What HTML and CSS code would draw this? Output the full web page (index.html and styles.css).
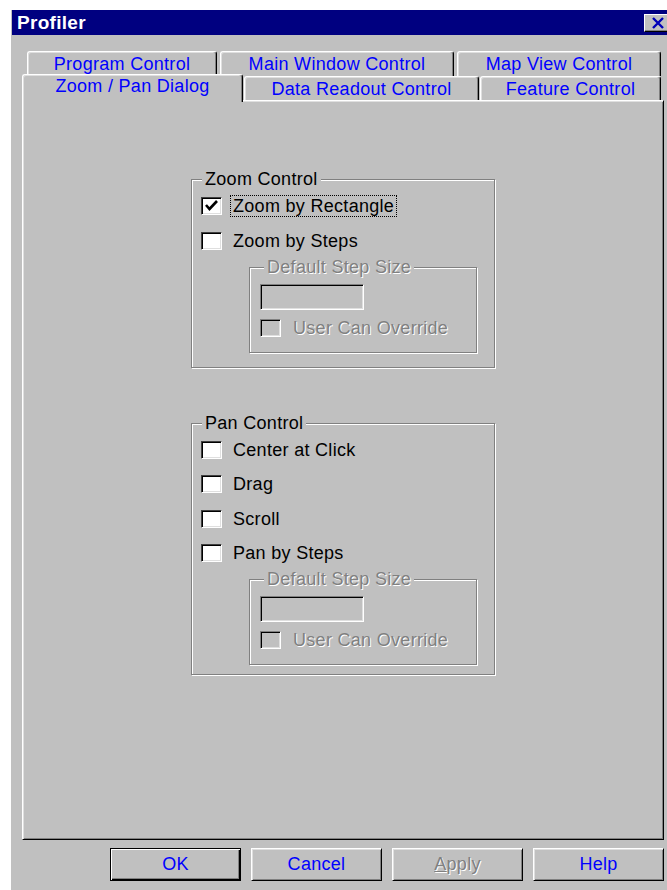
FILE: index.html
```html
<!DOCTYPE html>
<html lang="en">
<head>
<meta charset="utf-8">
<title>Profiler</title>
<link rel="stylesheet" href="styles.css">
</head>
<body>
<div class="window">
  <div class="titlebar">
    <span class="title">Profiler</span>
    <button class="close" type="button" aria-label="Close">
      <svg width="14" height="12" viewBox="0 0 14 12"><path d="M2 1 L12 11 M12 1 L2 11" stroke="#0000b8" stroke-width="2.4" fill="none"/></svg>
    </button>
  </div>

  <div class="tabs">
    <div class="tab-row back">
      <div class="tab w-program">Program Control</div>
      <div class="tab w-main">Main Window Control</div>
      <div class="tab w-map">Map View Control</div>
    </div>
    <div class="tab-row front">
      <div class="tab selected w-zoom">Zoom / Pan Dialog</div>
      <div class="tab w-data">Data Readout Control</div>
      <div class="tab w-feature">Feature Control</div>
    </div>
  </div>

  <div class="panel">
    <div class="group group-zoom">
      <div class="legend">Zoom Control</div>
      <div class="options">
        <div class="option">
          <span class="check">
            <svg width="17" height="14" viewBox="0 0 17 14"><path d="M3 6 L6.5 10 L14 2" stroke="#000" stroke-width="2.6" fill="none"/></svg>
          </span>
          <span class="label focus">Zoom by Rectangle</span>
        </div>
        <div class="option">
          <span class="check"></span>
          <span class="label">Zoom by Steps</span>
        </div>
      </div>
      <div class="subgroup">
        <div class="legend disabled">Default Step Size</div>
        <div class="field"></div>
        <div class="option">
          <span class="check off"></span>
          <span class="label disabled">User Can Override</span>
        </div>
      </div>
    </div>

    <div class="group group-pan">
      <div class="legend">Pan Control</div>
      <div class="options">
        <div class="option">
          <span class="check"></span>
          <span class="label">Center at Click</span>
        </div>
        <div class="option">
          <span class="check"></span>
          <span class="label">Drag</span>
        </div>
        <div class="option">
          <span class="check"></span>
          <span class="label">Scroll</span>
        </div>
        <div class="option">
          <span class="check"></span>
          <span class="label">Pan by Steps</span>
        </div>
      </div>
      <div class="subgroup">
        <div class="legend disabled">Default Step Size</div>
        <div class="field"></div>
        <div class="option">
          <span class="check off"></span>
          <span class="label disabled">User Can Override</span>
        </div>
      </div>
    </div>
  </div>

  <div class="buttons">
    <button class="btn default" type="button">OK</button>
    <button class="btn" type="button">Cancel</button>
    <button class="btn inactive" type="button"><u>A</u>pply</button>
    <button class="btn" type="button">Help</button>
  </div>
</div>
</body>
</html>
```

FILE: styles.css
```css
html, body {
  margin: 0;
  background: #fff;
  overflow: hidden;
}

body {
  font-family: "Liberation Sans", Arial, sans-serif;
  font-size: 18px;
  letter-spacing: 0.3px;
  color: #000;
}

.window {
  margin: 10px 0 0 11px;
  width: 656px;
  height: 880px;
  background: #c0c0c0;
}

/* caption */
.titlebar {
  margin: 1px 0 0 1px;
  height: 25px;
  background: #000080;
  display: flex;
  align-items: center;
  justify-content: space-between;
  padding-left: 5px;
}

.title {
  color: #fff;
  font-weight: bold;
  font-size: 19px;
  letter-spacing: 0.3px;
}

.close {
  width: 27px;
  height: 18px;
  margin-right: -4px;
  padding: 0;
  background: #c0c0c0;
  border: 1px solid;
  border-color: #fff #000 #000 #fff;
  box-shadow: inset -1px -1px 0 #808080;
  display: flex;
  align-items: center;
  justify-content: center;
}

.close svg { display: block; }

/* tab strip */
.tabs {
  margin-top: 16px;
}

.tab-row {
  display: flex;
  align-items: flex-start;
}

.tab-row.back {
  gap: 3px;
  padding-left: 16px;
}

.tab-row.front {
  gap: 1px;
  padding-left: 11px;
}

.tab {
  box-sizing: border-box;
  height: 25px;
  line-height: 24px;
  text-align: center;
  color: #0000ff;
  background: #c0c0c0;
  border-top: 1px solid #fff;
  border-left: 1px solid #fff;
  border-right: 1px solid #000;
  border-radius: 3px 3px 0 0;
  box-shadow: inset -1px 0 0 #808080, inset 1px 1px 0 #dfdfdf;
  white-space: nowrap;
}

.front .tab {
  height: 24px;
  line-height: 25px;
}

.front .tab.selected {
  position: relative;
  z-index: 1;
  height: 28px;
  line-height: 22px;
  margin-top: -2px;
  margin-bottom: -2px;
}

.w-program { width: 190px; }
.w-main { width: 234px; }
.w-map { width: 204px; }
.w-zoom { width: 221px; }
.w-data { width: 235px; }
.w-feature { width: 181px; }

/* page body */
.panel {
  box-sizing: border-box;
  margin-left: 11px;
  width: 642px;
  height: 740px;
  border: 1px solid;
  border-color: #fff #000 #000 #fff;
  box-shadow: inset 1px 1px 0 #dfdfdf, inset -1px -1px 0 #808080;
  padding: 78px 0 0 168px;
}

.group {
  box-sizing: border-box;
  width: 304px;
  border: 1px solid #808080;
  box-shadow: inset 1px 1px 0 #fff, 1px 1px 0 #fff;
  padding: 0 0 14px 9px;
}

.group-pan {
  margin-top: 55px;
  padding-bottom: 9px;
}

.legend {
  width: fit-content;
  margin: -11px 0 0 1px;
  padding: 0 3px;
  line-height: 20px;
  background: #c0c0c0;
}

.options {
  margin-top: 6px;
  display: flex;
  flex-direction: column;
  gap: 12.5px;
}

.option {
  display: flex;
  align-items: center;
  gap: 8px;
  height: 22px;
}

.check {
  box-sizing: border-box;
  width: 21px;
  height: 18px;
  flex: none;
  background: #fff;
  border: 1px solid;
  border-color: #404040 #fff #fff #404040;
  box-shadow: inset 1px 1px 0 #000, inset -1px -1px 0 #dfdfdf;
  display: flex;
  align-items: center;
  justify-content: center;
}

.check svg { display: block; }

.check.off {
  background: #c0c0c0;
  border-color: #808080 #fff #fff #808080;
  box-shadow: inset 1px 1px 0 #000, inset -1px -1px 0 #dfdfdf;
}

.label {
  padding: 0 2px;
  border: 1px dotted transparent;
  line-height: 20px;
  white-space: nowrap;
}

.label.focus {
  border-color: #000;
}

.disabled {
  color: #808080;
  text-shadow: 1px 1px 0 #fff;
}

.subgroup {
  box-sizing: border-box;
  width: 228px;
  margin: 15px 0 0 48px;
  border: 1px solid #808080;
  box-shadow: inset 1px 1px 0 #fff, 1px 1px 0 #fff;
  padding: 0 0 13px 10px;
}

.subgroup .legend {
  margin-left: 4px;
}

.field {
  box-sizing: border-box;
  width: 104px;
  height: 26px;
  margin-top: 7px;
  background: #c0c0c0;
  border: 1px solid;
  border-color: #808080 #fff #fff #808080;
  box-shadow: inset 1px 1px 0 #000, inset -1px -1px 0 #dfdfdf;
}

.subgroup .option {
  margin-top: 7px;
  gap: 9px;
}

/* command buttons */
.buttons {
  margin-top: 8px;
  padding-right: 3px;
  display: flex;
  justify-content: flex-end;
  gap: 10px;
}

.btn {
  box-sizing: border-box;
  width: 131px;
  height: 33px;
  padding: 0;
  font-family: "Liberation Sans", Arial, sans-serif;
  font-size: 18px;
  letter-spacing: 0.3px;
  color: #0000ff;
  background: #c0c0c0;
  border: 1px solid;
  border-color: #fff #000 #000 #fff;
  box-shadow: inset 1px 1px 0 #dfdfdf, inset -1px -1px 0 #808080;
}

.btn.default {
  border-color: #000;
  box-shadow: inset 1px 1px 0 #fff, inset -1px -1px 0 #000, inset -2px -2px 0 #808080;
}

.btn.inactive {
  color: #808080;
  text-shadow: 1px 1px 0 #fff;
}
```
